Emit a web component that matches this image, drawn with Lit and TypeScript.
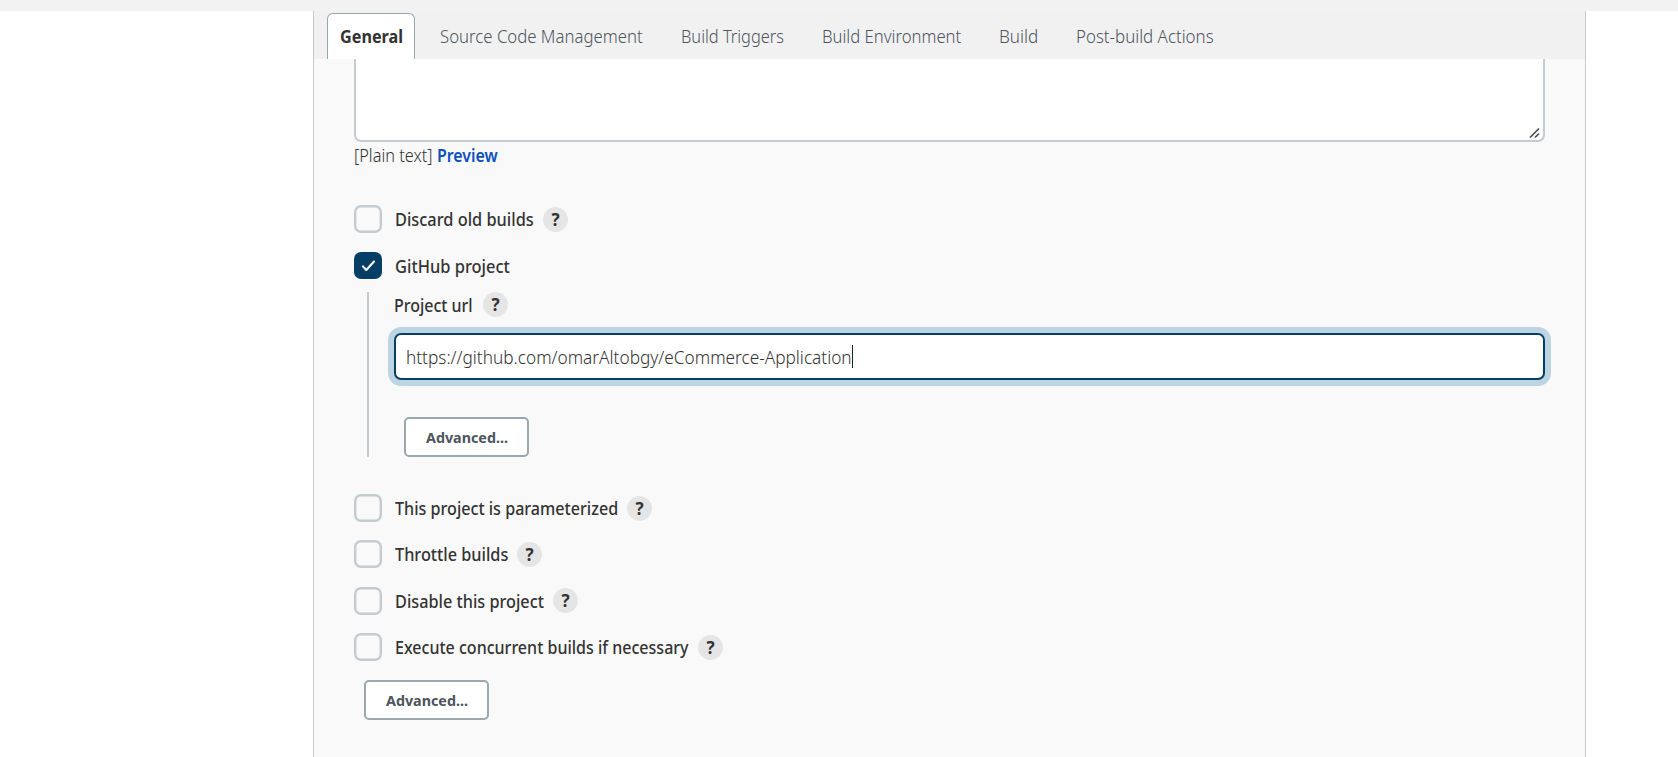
import { LitElement, html, css } from "lit";
import { customElement, property } from "lit/decorators.js";

/* A single line of text condensed so that it fills a given width. */
@customElement("fit-text")
class FitText extends LitElement {
  @property() text = "";
  @property({ type: Number }) w = 100;

  static styles = css`
    :host { display: block; flex: none; white-space: pre; }
    .t { display: inline-block; transform-origin: 0 50%; }
  `;

  updated() {
    this.style.width = `${this.w}px`;
    const t = this.renderRoot.querySelector(".t") as HTMLElement;
    t.style.transform = `scaleX(${this.w / t.offsetWidth})`;
  }

  render() {
    return html`<span class="t">${this.text}</span>`;
  }
}

@customElement("help-badge")
class HelpBadge extends LitElement {
  static styles = css`
    :host {
      display: flex; flex: none; width: 25px; height: 25px; border-radius: 50%;
      background: #e5e5e5; color: #333; align-items: center; justify-content: center;
      font-size: 17px; font-weight: 700; line-height: 25px;
    }
  `;
  render() {
    return html`<span>?</span>`;
  }
}

@customElement("check-row")
class CheckRow extends LitElement {
  @property() label = "";
  @property({ type: Number }) w = 100;
  @property({ type: Boolean }) checked = false;
  @property({ type: Boolean }) help = false;

  static styles = css`
    :host { display: flex; height: 28px; align-items: center; }
    .box {
      box-sizing: border-box; width: 28px; height: 28px; box-shadow: inset 0 0 0 2.4px #c3ccd1;
      border-radius: 7px; margin-right: 13px; flex: none; padding: 2px;
    }
    .on { background: #063f65; box-shadow: none; height: 27px; }
    svg { display: block; width: 24px; height: 23px; }
    .label { font-weight: 500; line-height: 28px; }
    .checked { padding-top: 1px; }
    help-badge { margin-left: 9px; }
  `;

  render() {
    return html`
      <div class="box ${this.checked ? "on" : ""}">
        ${this.checked
          ? html`<svg viewBox="0 0 24 23" fill="none" stroke="#fff" stroke-width="2" stroke-linecap="round" stroke-linejoin="round"><path d="M7 12.3 L10.3 16 L18 7.5" /></svg>`
          : ""}
      </div>
      <fit-text class="label ${this.checked ? "checked" : ""}" .text=${this.label} .w=${this.w}></fit-text>
      ${this.help ? html`<help-badge></help-badge>` : ""}
    `;
  }
}

@customElement("app-root")
class AppRoot extends LitElement {
  static styles = css`
    :host {
      display: flex; flex-direction: column; height: 757px; overflow: hidden; background: #fff;
      font-family: "Noto Sans", "Open Sans", sans-serif; font-size: 18px; font-weight: 350; color: #333;
    }
    .strip { height: 11px; background: #f2f2f2; flex: none; }
    .panel {
      box-sizing: border-box; width: 1273px; margin-left: 313px; flex: 1; background: #f9f9f9;
      border: solid #c4c9cc; border-width: 0 1px;
    }
    .tabs {
      display: flex; height: 48px; background: #f1f1f1; padding-left: 13px; color: #4d545d;
      box-sizing: border-box; padding-top: 2px; line-height: 46px;
    }
    .tab { margin-right: 38px; }
    .active {
      box-sizing: border-box; width: 88px; height: 46px; border: 1px solid #98a6ae; border-bottom: 0;
      border-radius: 6px 6px 0 0; background: #fff; color: #333; font-weight: 700; line-height: 44px;
      padding-left: 12px; margin-right: 25px;
    }
    .form { padding: 0 40px; display: flex; flex-direction: column; }
    .area {
      box-sizing: border-box; height: 83px; background: #fff; border: 2px solid #c3ccd1; border-top: 0;
      border-radius: 0 0 7px 7px; display: flex; align-items: flex-end; justify-content: flex-end; padding: 0 2px 1px 0;
    }
    .area svg { width: 12px; height: 12px; display: block; }
    .format { display: flex; height: 28px; line-height: 26px; gap: 4px; margin-bottom: 35px; }
    .preview { color: #0b50bf; font-weight: 600; }
    .gap { margin-top: 18px; }
    .nested {
      border-left: 2px solid #c0cad0; margin: 13px 0 37px 13px; height: 165px; padding-left: 25px;
      display: flex; flex-direction: column; align-items: flex-start;
    }
    .caption { display: flex; height: 25px; line-height: 27px; font-weight: 500; gap: 10px; }
    .input {
      box-sizing: border-box; width: 1151px; height: 47px; margin: 16px 0 37px; background: #fff;
      border: 2px solid #063f65; border-radius: 7px; box-shadow: 0 0 0 6px #bdd5e3;
      display: flex; align-items: center; padding-left: 10px; line-height: 44px;
    }
    .caret { width: 1px; height: 23px; background: #222; }
    .button {
      box-sizing: border-box; width: 125px; height: 40px; border: 2px solid #9aa8b0; border-radius: 5px;
      background: #fff; color: #4d545d; font-size: 15px; font-weight: 700; line-height: 36px;
      display: flex; justify-content: center; margin-left: 10px;
    }
    .options { display: flex; flex-direction: column; gap: 18.4px; margin-bottom: 19px; }
  `;

  private tabs: [string, number][] = [
    ["Source Code Management", 203],
    ["Build Triggers", 103],
    ["Build Environment", 139],
    ["Build", 39],
    ["Post-build Actions", 138],
  ];

  private options: [string, number][] = [
    ["This project is parameterized", 223],
    ["Throttle builds", 113],
    ["Disable this project", 149],
    ["Execute concurrent builds if necessary", 294],
  ];

  render() {
    return html`
      <div class="strip"></div>
      <div class="panel">
        <div class="tabs">
          <div class="active"><fit-text .text=${"General"} .w=${63}></fit-text></div>
          ${this.tabs.map(([t, w]) => html`<fit-text class="tab" .text=${t} .w=${w}></fit-text>`)}
        </div>
        <div class="form">
          <div class="area">
            <svg viewBox="0 0 12 12" stroke="#4a4a4a" stroke-width="1.6" fill="none"><path d="M1 10.5 L10 1.5 M6 10.5 L10 6.5" /></svg>
          </div>
          <div class="format">
            <fit-text .text=${"[Plain text]"} .w=${79}></fit-text>
            <fit-text class="preview" .text=${"Preview"} .w=${61}></fit-text>
          </div>
          <check-row .label=${"Discard old builds"} .w=${139} help></check-row>
          <check-row class="gap" .label=${"GitHub project"} .w=${115} checked></check-row>
          <div class="nested">
            <div class="caption"><fit-text .text=${"Project url"} .w=${79}></fit-text><help-badge></help-badge></div>
            <div class="input">
              <fit-text .text=${"https://github.com/omarAltobgy/eCommerce-Application"} .w=${446}></fit-text>
              <div class="caret"></div>
            </div>
            <div class="button"><fit-text .text=${"Advanced..."} .w=${82}></fit-text></div>
          </div>
          <div class="options">
            ${this.options.map(([t, w]) => html`<check-row .label=${t} .w=${w} help></check-row>`)}
          </div>
          <div class="button"><fit-text .text=${"Advanced..."} .w=${82}></fit-text></div>
        </div>
      </div>
    `;
  }
}
